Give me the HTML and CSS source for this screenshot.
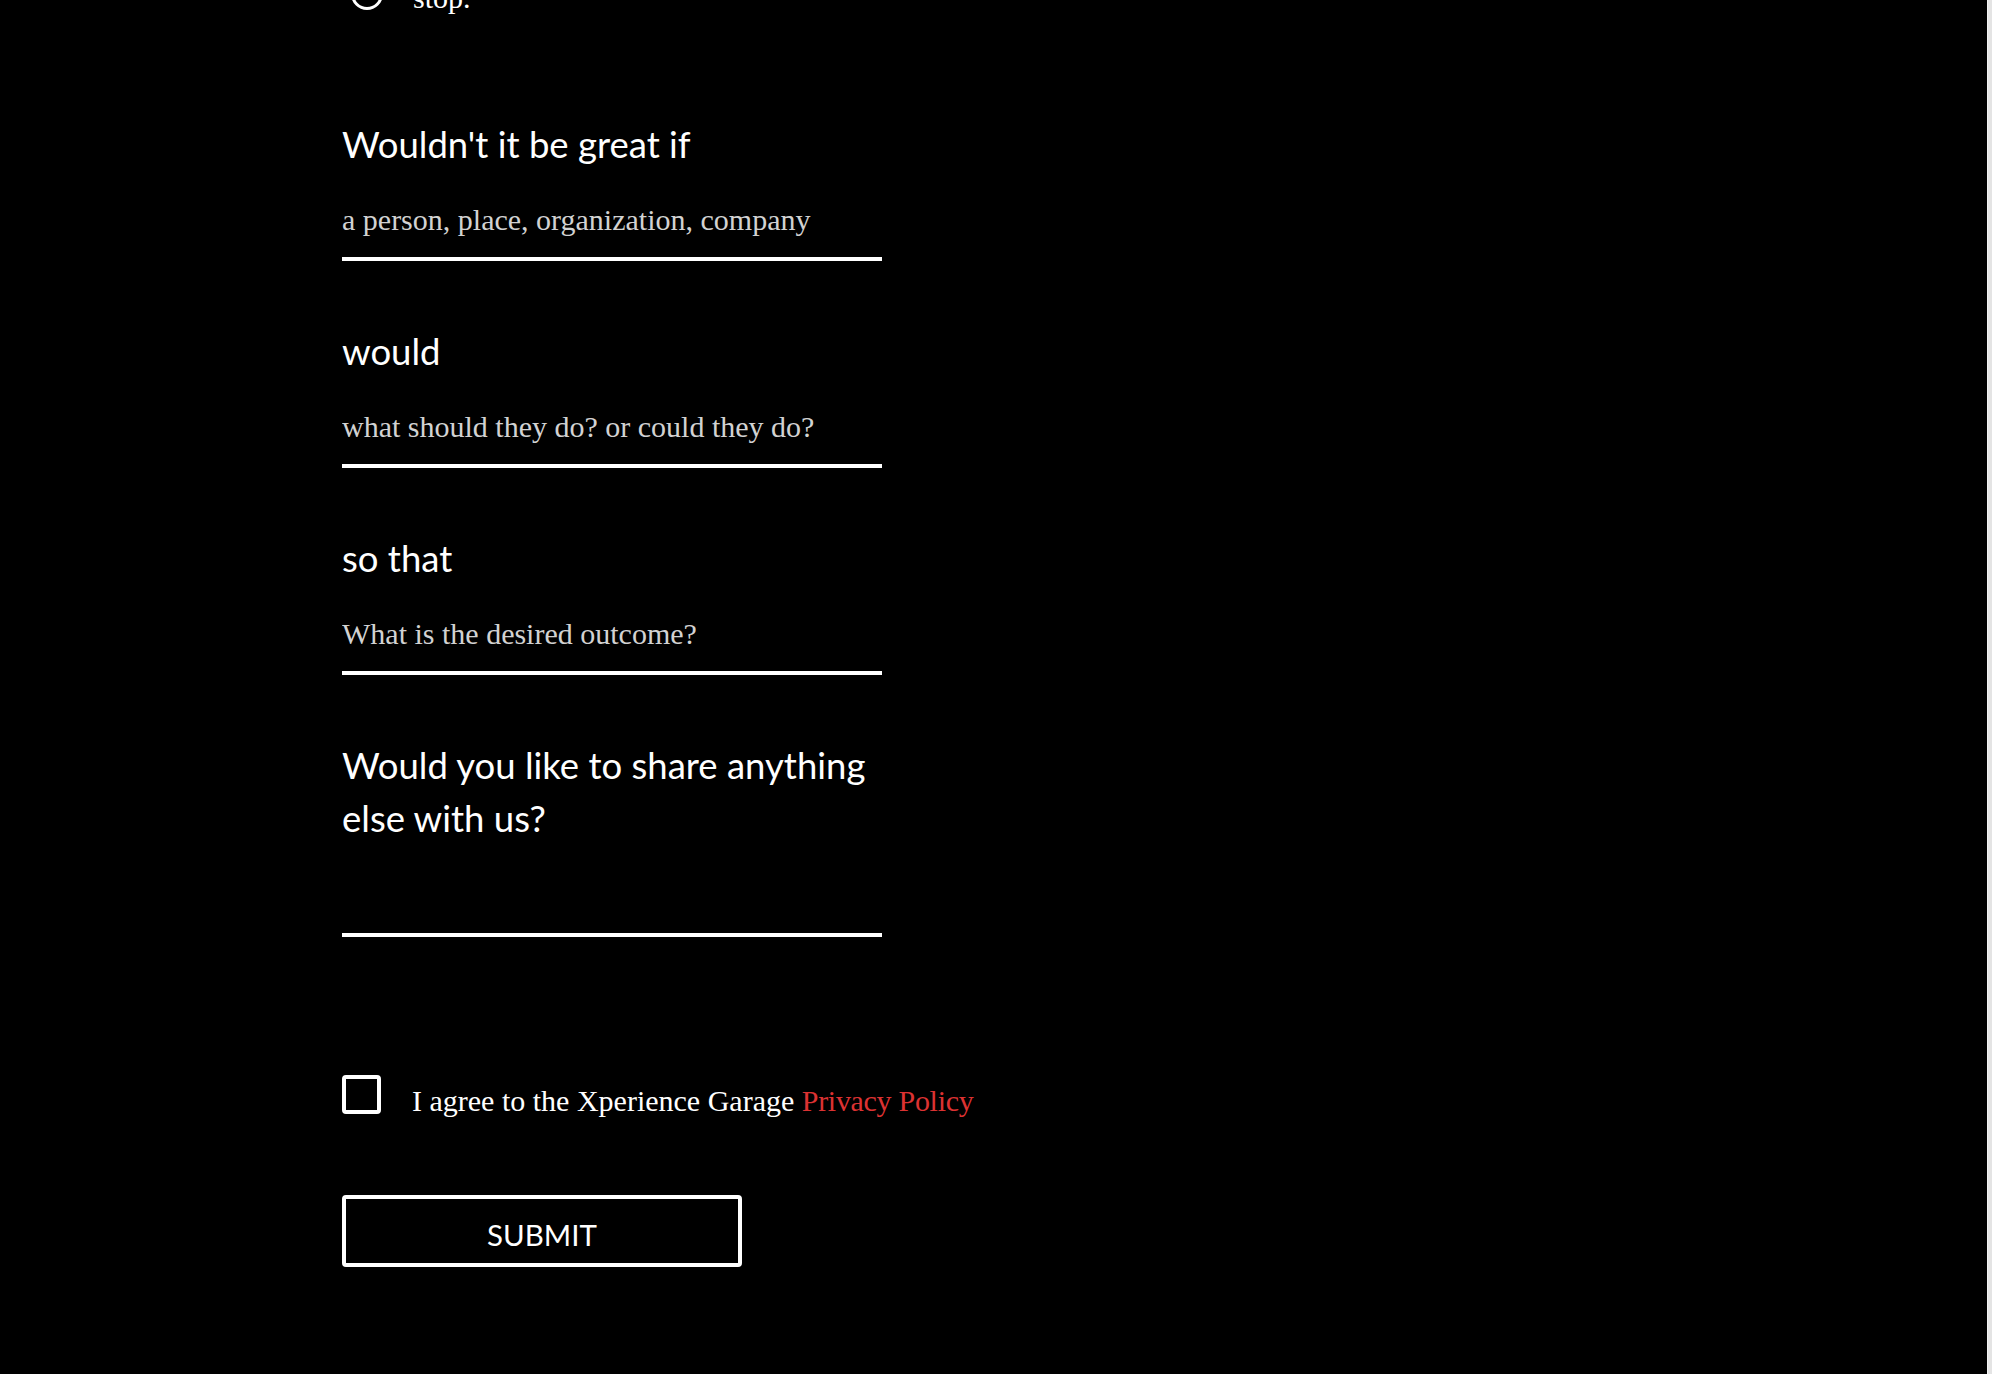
FILE: index.html
```html
<!DOCTYPE html>
<html lang="en">
<head>
<meta charset="utf-8">
<title>Idea form</title>
<link rel="stylesheet" href="styles.css">
</head>
<body>
<div class="page">
  <form class="form">
    <div class="radio-row">
      <span class="radio"></span>
      <span class="radio-text">stop.</span>
    </div>

    <div class="field first">
      <label class="label" for="f1">Wouldn't it be great if</label>
      <input class="input" id="f1" type="text" placeholder="a person, place, organization, company">
    </div>

    <div class="field">
      <label class="label" for="f2">would</label>
      <input class="input" id="f2" type="text" placeholder="what should they do? or could they do?">
    </div>

    <div class="field">
      <label class="label" for="f3">so that</label>
      <input class="input" id="f3" type="text" placeholder="What is the desired outcome?">
    </div>

    <div class="field">
      <label class="label" for="f4">Would you like to share anything else with us?</label>
      <textarea class="textarea" id="f4"></textarea>
    </div>

    <div class="agree-row">
      <span class="checkbox"></span>
      <span class="agree-text">I agree to the Xperience Garage <a class="policy" href="#">Privacy Policy</a></span>
    </div>

    <button class="submit" type="button">SUBMIT</button>
  </form>
</div>
<div class="scrollbar"></div>
</body>
</html>
```

FILE: styles.css
```css
html, body {
  margin: 0;
  padding: 0;
  height: 100%;
  overflow: hidden;
}

body {
  background: #000;
  display: flex;
  font-family: "Lato", "Noto Sans", sans-serif;
  color: #fff;
}

.page {
  flex: 1;
  min-width: 0;
}

.scrollbar {
  width: 4px;
  flex: none;
  background: #e4e4e4;
  border-left: 1px solid #f3f3f3;
}

.form {
  width: 540px;
  padding-left: 342px;
  display: flex;
  flex-direction: column;
}

.radio-row {
  display: flex;
  align-items: center;
  margin-top: -22px;
  height: 32px;
  padding-left: 9px;
}

.radio {
  width: 26px;
  height: 26px;
  border: 3px solid #fff;
  border-radius: 50%;
}

.radio-text {
  margin-left: 30px;
  font-family: "Liberation Serif", "DejaVu Serif", serif;
  font-size: 30px;
  line-height: 32px;
  padding-top: 8px;
}

.field {
  display: flex;
  flex-direction: column;
  margin-top: 64px;
}

.field.first {
  margin-top: 108px;
}

.label {
  font-size: 36.5px;
  line-height: 53px;
  color: #fff;
}

.input,
.textarea {
  display: block;
  box-sizing: content-box;
  width: 540px;
  margin: 12px 0 0;
  padding: 0;
  border: none;
  border-bottom: 4px solid #fff;
  background: transparent;
  outline: none;
  color: #fff;
  font-family: "Liberation Serif", "DejaVu Serif", serif;
  font-size: 30px;
}

.input {
  height: 74px;
}

.textarea {
  height: 88px;
  margin-top: 0;
  resize: none;
}

.input::placeholder {
  color: #d2d2d2;
  opacity: 1;
}

.agree-row {
  display: flex;
  align-items: flex-start;
  margin-top: 138px;
  white-space: nowrap;
}

.checkbox {
  width: 31px;
  height: 31px;
  border: 4px solid #fff;
  border-radius: 4px;
  flex: none;
}

.agree-text {
  margin-left: 31px;
  margin-top: 6px;
  font-family: "Liberation Serif", "DejaVu Serif", serif;
  font-size: 30px;
  line-height: 39px;
}

.policy {
  color: #dc3232;
  text-decoration: none;
  letter-spacing: -0.3px;
}

.submit {
  margin-top: 75px;
  width: 400px;
  height: 72px;
  box-sizing: border-box;
  border: 4px solid #fff;
  border-radius: 4px;
  background: #000;
  color: #fff;
  font-family: "Lato", "Noto Sans", sans-serif;
  font-size: 29.5px;
  padding: 6px 0 0;
  cursor: pointer;
}
```
